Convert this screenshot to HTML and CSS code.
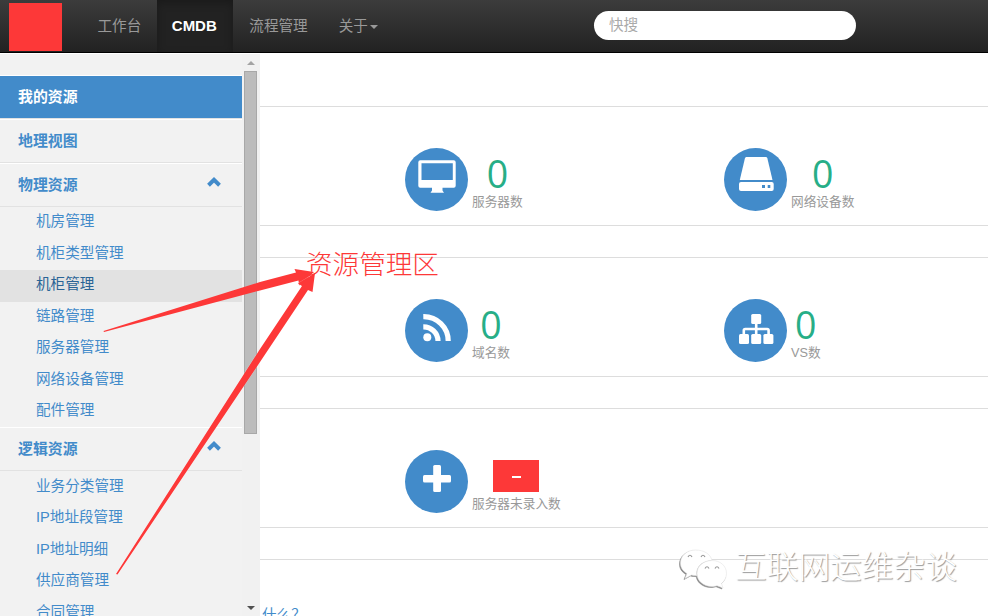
FILE: index.html
```
<!DOCTYPE html>
<html lang="zh-CN">
<head>
    <meta charset="UTF-8">
    <title>CMDB</title>
    <link rel="stylesheet" href="styles.css">
</head>
<body>
    <nav class="navbar">
        <a class="brand" href="#"></a>
        <ul class="nav">
            <li><a href="#">工作台</a></li>
            <li class="active"><a href="#">CMDB</a></li>
            <li><a href="#">流程管理</a></li>
            <li><a href="#">关于<span class="caret"></span></a></li>
        </ul>
        <input class="search" type="text" placeholder="快搜">
    </nav>

    <div class="page">
        <aside class="sidebar">
            <div class="menu">
                <a class="menu-head active" href="#">我的资源</a>
                <a class="menu-head" href="#">地理视图</a>
                <a class="menu-head" href="#">物理资源
                    <svg class="chevron" viewBox="0 0 14 10"><path d="M1.500 8.200 7 2.900 12.500 8.200" /></svg>
                </a>
                <ul class="submenu">
                    <li><a href="#">机房管理</a></li>
                    <li><a href="#">机柜类型管理</a></li>
                    <li class="current"><a href="#">机柜管理</a></li>
                    <li><a href="#">链路管理</a></li>
                    <li><a href="#">服务器管理</a></li>
                    <li><a href="#">网络设备管理</a></li>
                    <li><a href="#">配件管理</a></li>
                </ul>
                <a class="menu-head" href="#">逻辑资源
                    <svg class="chevron" viewBox="0 0 14 10"><path d="M1.500 8.200 7 2.900 12.500 8.200" /></svg>
                </a>
                <ul class="submenu">
                    <li><a href="#">业务分类管理</a></li>
                    <li><a href="#">IP地址段管理</a></li>
                    <li><a href="#">IP地址明细</a></li>
                    <li><a href="#">供应商管理</a></li>
                    <li><a href="#">合同管理</a></li>
                </ul>
            </div>
            <div class="scrollbar">
                <span class="arrow-up"></span>
                <span class="thumb"></span>
                <span class="arrow-down"></span>
            </div>
        </aside>

        <main class="content">
            <section class="row">
                <div class="stat">
                    <svg class="icon" viewBox="0 0 63 63">
                        <circle cx="31.5" cy="31.5" r="31.5" />
                        <path class="fg" fill-rule="evenodd" d="M15.3 12.3H48.7a2 2 0 0 1 2 2V37.7a2 2 0 0 1-2 2H37.500V42.5L39 44.7H25.5L27 42.5V39.7H15.3a2 2 0 0 1-2-2V14.3a2 2 0 0 1 2-2ZM16.5 15.3V32H47.8V15.3Z" />
                    </svg>
                    <div class="info"><b>0</b><span>服务器数</span></div>
                </div>
                <div class="stat">
                    <svg class="icon" viewBox="0 0 63 63">
                        <circle cx="31.5" cy="31.5" r="31.5" />
                        <path class="fg" d="M22 9H42.3L43.3 10 48.5 32H15.8L21 10Z" />
                        <rect class="fg" x="15" y="34" width="34.7" height="9" rx="2" />
                        <path d="M38 37h3v3h-3ZM43.7 37h2.6v3h-2.6Z" />
                    </svg>
                    <div class="info"><b>0</b><span>网络设备数</span></div>
                </div>
            </section>
            <section class="row">
                <div class="stat">
                    <svg class="icon" viewBox="0 0 63 63">
                        <circle cx="31.5" cy="31.5" r="31.5" />
                        <circle class="fg" cx="22.3" cy="38.2" r="4" />
                        <path class="line" d="M18.3 17.7A24.5 24.3 0 0 1 43.2 42M18.3 27.8A14.5 14.3 0 0 1 33 42" />
                    </svg>
                    <div class="info"><b>0</b><span>域名数</span></div>
                </div>
                <div class="stat">
                    <svg class="icon" viewBox="0 0 63 63">
                        <circle cx="31.5" cy="31.5" r="31.5" />
                        <rect class="fg" x="27.2" y="15" width="10" height="10" rx="1.5" />
                        <rect class="fg" x="15" y="35" width="10" height="10" rx="1.5" />
                        <rect class="fg" x="27.2" y="35" width="10" height="10" rx="1.5" />
                        <rect class="fg" x="39.4" y="35" width="10" height="10" rx="1.5" />
                        <path class="thin" d="M32.2 24V36M19.8 36V31.5Q19.8 30 21.3 30H43.1Q44.6 30 44.6 31.5V36" />
                    </svg>
                    <div class="info"><b>0</b><span>VS数</span></div>
                </div>
            </section>
            <section class="row">
                <div class="stat">
                    <svg class="icon" viewBox="0 0 63 63">
                        <circle cx="31.5" cy="31.5" r="31.5" />
                        <rect class="fg" x="18" y="25" width="28" height="7.5" rx="1.5" />
                        <rect class="fg" x="28.2" y="15" width="7.8" height="27" rx="1.5" />
                    </svg>
                    <div class="info"><i class="masked"></i><span>服务器未录入数</span></div>
                </div>
            </section>
            <section class="row last">
                <a href="#">什么？</a>
            </section>
        </main>
    </div>

    <!-- annotations -->
    <svg class="arrows" viewBox="0 0 988 616">
        <path d="M103.5 331 104 332 260 290.5 298.5 280.5 299 285.5 314 272 294.5 269 296 272.5 260 282Z" />
        <path class="edge" d="M116 574 117.500 574.500 260 362 308 290 312.500 292 315 273 298 283.500 302 286 260 349Z" />
    </svg>
    <div class="note">资源管理区</div>

    <div class="watermark">
        <svg class="wechat" viewBox="0 0 50 44">
            <path class="bubble" d="M17.500 4C8.500 4 2.500 10 2.500 17c0 5 2.500 8 6.500 10.500L7 32.500l6.500-3.500c2 .5 3.500 .7 5.500 .5C17 21 25 14.500 34 14.500 32.500 8 26 4 17.500 4Z" />
            <path class="bubble" d="M34 14.500c-8.500 0-15 5.500-15 13s6.500 13 15 13c2 0 3.500-.3 5-.8l6 2.300-1.500-4.500c3-2.300 5-6 5-10 0-7.500-6-13-14.500-13Z" />
            <path class="eyes" d="M10 11q2-3.500 4 0M23 11q2-3.500 4 0M27 22.500q2-3.500 4 0M37 22.500q2-3.500 4 0" />
        </svg>
        <span>互联网运维杂谈</span>
    </div>
</body>
</html>
```
FILE: styles.css
```
* {
    margin: 0;
    padding: 0;
    box-sizing: border-box;
}

body {
    position: relative;
    height: 616px;
    overflow: hidden;
    background: #fff;
    font-family: "Liberation Sans", "Noto Sans CJK SC", sans-serif;
    font-size: 14.6px;
}

a {
    color: #428bca;
    text-decoration: none;
}

ul {
    list-style: none;
}

/* navbar */
.navbar {
    display: flex;
    height: 53px;
    padding-left: 9px;
    background: linear-gradient(#3c3c3c, #222);
    border-bottom: 1px solid #000;
}

.brand {
    width: 53px;
    height: 48px;
    margin: 3px 20px 0 0;
    background: #fd3838;
}

.nav {
    display: flex;
    width: 512px;
}

.nav a {
    display: flex;
    align-items: center;
    height: 52px;
    padding: 0 15.5px 4px;
    color: #999;
}

.nav .active a {
    padding: 0 16px 2px 15px;
    background: #222;
    box-shadow: inset 0 3px 9px rgba(0, 0, 0, 0.25);
    color: #fff;
    font-size: 15px;
    font-weight: bold;
}

.nav li:nth-child(3) a {
    padding-left: 16.5px;
}

.caret {
    margin: 5px 0 0 2px;
    border-top: 4px solid #999;
    border-left: 4px solid transparent;
    border-right: 4px solid transparent;
}

.search {
    width: 262px;
    height: 29px;
    margin-top: 11px;
    padding: 0 15px 2px;
    border: 0;
    border-radius: 15px;
    background: #fff;
    font: inherit;
}

.search::placeholder {
    color: #aaa;
}

/* sidebar */
.page {
    display: flex;
    height: 563px;
}

.sidebar {
    display: flex;
    width: 260px;
    margin-top: 1px;
    background: #f2f2f2;
    overflow: hidden;
}

.menu {
    width: 242px;
    padding-top: 21px;
}

.menu-head {
    display: flex;
    align-items: center;
    justify-content: space-between;
    height: 44px;
    padding: 0 21px 4px 18px;
    border-top: 1px solid #fff;
    border-bottom: 1px solid #e2e2e2;
    font-size: 14.9px;
    font-weight: bold;
}

.menu-head.active {
    background: #428bca;
    color: #fff;
}

.chevron {
    width: 14px;
    height: 10px;
    margin-bottom: 3px;
    fill: none;
    stroke: #428bca;
    stroke-width: 4;
}

.submenu a {
    display: block;
    height: 31.5px;
    padding-left: 36px;
    line-height: 29px;
}

.submenu:last-child a {
    line-height: 31px;
}

.submenu + .menu-head {
    margin-top: -0.6px;
    padding-bottom: 2.5px;
}

.submenu .current a {
    background: #e2e2e2;
    color: #2a6496;
}

.scrollbar {
    display: flex;
    flex-direction: column;
    align-items: center;
    width: 18px;
    padding: 7px 3px 6px 2px;
    background: #f1f1f1;
}

.arrow-up {
    border: 4px solid transparent;
    border-top: 0;
    border-bottom-color: #a3a3a3;
}

.thumb {
    width: 13px;
    height: 363px;
    margin: 6px 0 auto;
    background: #bcbcbc;
    border: 1px solid #a8a8a8;
}

.arrow-down {
    border: 4px solid transparent;
    border-bottom: 0;
    border-top-color: #505050;
}

/* stats */
.content {
    flex: 1;
    padding-top: 53px;
    overflow: hidden;
}

.row {
    display: grid;
    grid-template-columns: 319px 319px;
    height: 120px;
    margin-bottom: 31px;
    padding: 41px 0 0 145px;
    border-top: 1px solid #ddd;
    border-bottom: 1px solid #ddd;
}

.row.last {
    padding: 43px 0 0 2px;
}

.stat {
    display: flex;
    align-items: flex-start;
}

.icon {
    width: 63px;
    height: 63px;
    margin-right: 4px;
    fill: #428bca;
}

.icon .fg {
    fill: #fff;
}

.icon .line,
.icon .thin {
    fill: none;
    stroke: #fff;
    stroke-width: 5.2;
}

.icon .thin {
    stroke-width: 2.6;
}

.info {
    display: flex;
    flex-direction: column;
    align-items: center;
    padding-top: 4px;
    color: #999;
    font-size: 12.7px;
}

.info b {
    height: 42px;
    color: #27ae87;
    font: 37.5px/43px "Open Sans", sans-serif;
}

.info span {
    line-height: 16px;
}

.masked {
    width: 46px;
    height: 32px;
    margin: 6px 0 4px;
    background: linear-gradient(#fff, #fff) 19px 16px / 9px 2px no-repeat #fd3838;
}

/* overlays */
.arrows {
    position: absolute;
    top: 0;
    left: 0;
    width: 988px;
    height: 616px;
    fill: #fd3838;
}

.arrows .edge {
    stroke: #fff;
    stroke-width: 0.3;
    paint-order: stroke;
}

.note {
    position: absolute;
    top: 246px;
    left: 306px;
    color: #fd3838;
    font-size: 26.6px;
    font-weight: 300;
    line-height: 38px;
}

.watermark {
    position: absolute;
    top: 546px;
    left: 678px;
    display: flex;
    gap: 7px;
    color: #fff;
    font-size: 31.7px;
    font-weight: 300;
    line-height: 42px;
    text-shadow: 1px 1px 1px #999;
}

.wechat {
    width: 50px;
    height: 44px;
    fill: #fff;
    filter: drop-shadow(-0.5px 1px 0.5px #888);
}

.wechat .bubble {
    stroke: #e4e4e4;
    stroke-width: 0.6;
}

.wechat .eyes {
    fill: none;
    stroke: #999;
    stroke-width: 1.2;
}
```
